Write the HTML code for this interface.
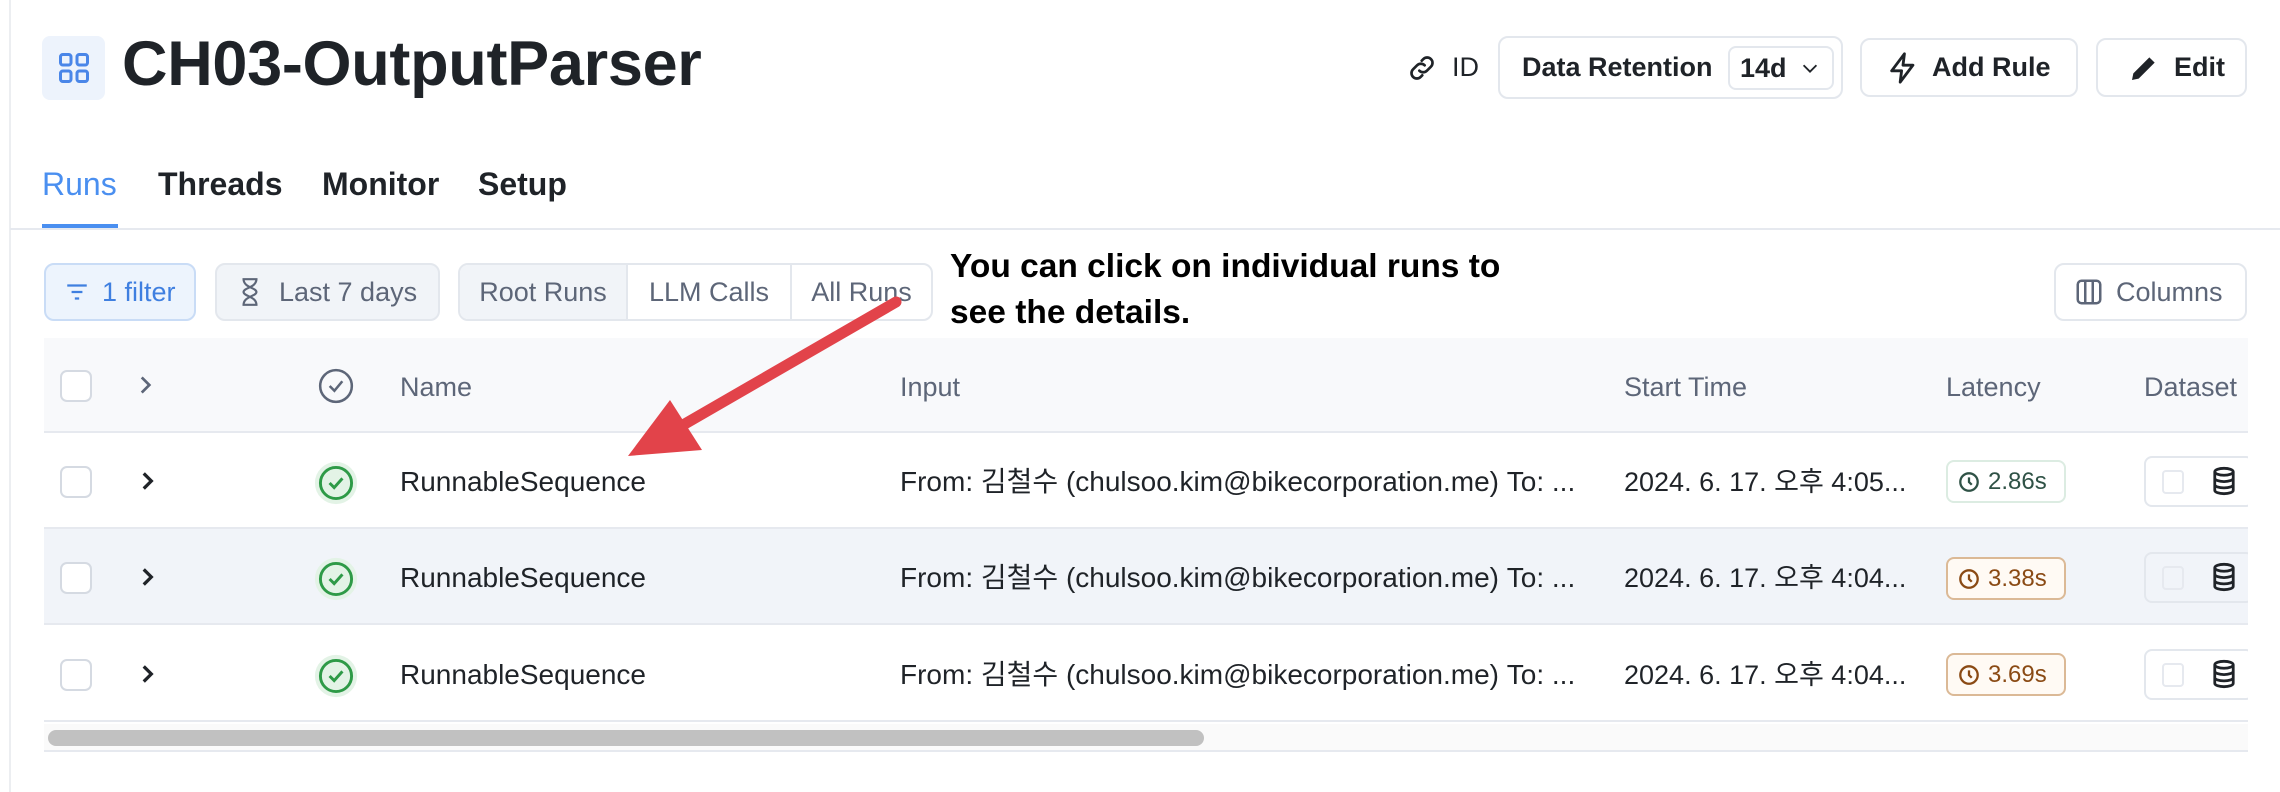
<!DOCTYPE html>
<html><head><meta charset="utf-8"><style>
*{box-sizing:border-box;margin:0;padding:0}
body{width:2280px;height:792px;background:#fff;position:relative;overflow:hidden;font-family:"Liberation Sans","Noto Sans CJK KR",sans-serif;color:#1f2328}
.a{position:absolute}
.btn{position:absolute;border:2px solid #e3e7ed;border-radius:10px;display:flex;align-items:center;font-size:27px;font-weight:bold;color:#1f2328}
.g{color:#5d6678;font-weight:normal}
.hdr{position:absolute;top:372px;font-size:27px;color:#5d6678}
.cb{position:absolute;width:32px;height:32px;border:2px solid #d5dae2;border-radius:7px;background:#fff}
.row{position:absolute;left:44px;width:2204px;height:96px;border-bottom:2px solid #e6e9ef}
.t{position:absolute;font-size:28px;line-height:32px;height:32px;color:#1f2328;white-space:nowrap}
.lat{position:absolute;left:1946px;width:120px;height:43px;border:2px solid;border-radius:8px;font-size:24px;display:flex;align-items:center;padding-left:10px;gap:8px}
.ds{position:absolute;left:2144px;width:110px;height:51px;border:2px solid #e3e7ed;border-radius:8px;background:#fff}
</style></head><body>
<div class="a" style="left:9px;top:0;width:2px;height:792px;background:#eceef1"></div>
<div class="a" style="left:42px;top:36px;width:63px;height:64px;background:#edf3fc;border-radius:8px"></div>
<svg class="a" style="left:56px;top:50px" width="36" height="36" viewBox="0 0 24 24" fill="none" stroke="#4a86e8" stroke-width="2"><rect x="3" y="3" width="7" height="7" rx="1.5"/><rect x="14" y="3" width="7" height="7" rx="1.5"/><rect x="3" y="14" width="7" height="7" rx="1.5"/><rect x="14" y="14" width="7" height="7" rx="1.5"/></svg>
<div class="a" style="left:122px;top:28px;font-size:63px;font-weight:bold;color:#1f2328;letter-spacing:-0.3px">CH03-OutputParser</div>

<svg class="a" style="left:1406px;top:52px" width="32" height="32" viewBox="0 0 24 24" fill="none" stroke="#1f2328" stroke-width="2" stroke-linecap="round"><path d="M10 14a4 4 0 0 0 5.7 0l3-3a4 4 0 0 0-5.7-5.7l-1.2 1.2"/><path d="M14 10a4 4 0 0 0-5.7 0l-3 3a4 4 0 0 0 5.7 5.7l1.2-1.2"/></svg>
<div class="a" style="left:1452px;top:52px;font-size:27px;color:#1f2328">ID</div>
<div class="btn" style="left:1498px;top:36px;width:345px;height:63px;padding-left:22px">Data Retention
 <div style="position:absolute;left:228px;top:8px;width:106px;height:44px;border:2px solid #e3e7ed;border-radius:8px;display:flex;align-items:center;padding-left:10px">14d<svg style="margin-left:12px" width="22" height="22" viewBox="0 0 24 24" fill="none" stroke="#1f2328" stroke-width="2"><path d="M5 9l7 7 7-7"/></svg></div></div>
<div class="btn" style="left:1860px;top:38px;width:218px;height:59px;padding-left:24px"><svg width="34" height="34" viewBox="0 0 24 24" fill="none" stroke="#1f2328" stroke-width="2" stroke-linejoin="round"><path d="M13 2L4 14h7l-1 8 9-12h-7z"/></svg><span style="margin-left:12px">Add Rule</span></div>
<div class="btn" style="left:2096px;top:38px;width:151px;height:59px;padding-left:30px"><svg width="32" height="32" viewBox="0 0 24 24"><path d="M3 21l1-5L16 4l4 4L8 20z" fill="#1f2328"/></svg><span style="margin-left:14px">Edit</span></div>

<div class="a" style="left:42px;top:166px;font-size:32px;color:#4a8ff0">Runs</div>
<div class="a" style="left:158px;top:166px;font-size:32px;font-weight:bold">Threads</div>
<div class="a" style="left:322px;top:166px;font-size:32px;font-weight:bold">Monitor</div>
<div class="a" style="left:478px;top:166px;font-size:32px;font-weight:bold">Setup</div>
<div class="a" style="left:42px;top:224px;width:76px;height:4px;background:#4a8ff0"></div>
<div class="a" style="left:10px;top:228px;width:2270px;height:2px;background:#e6e9ef"></div>

<div class="btn" style="left:44px;top:263px;width:152px;height:58px;background:#edf4fd;border-color:#c9dcf6;color:#3f7fe0;font-weight:normal;padding-left:18px"><svg width="26" height="26" viewBox="0 0 24 24" stroke="#3f7fe0" stroke-width="2"><path d="M3 6h18M7 12h10M10 18h4"/></svg><span style="margin-left:12px">1 filter</span></div>
<div class="btn g" style="left:215px;top:263px;width:225px;height:58px;background:#f1f4f8;padding-left:20px"><svg width="26" height="30" viewBox="0 0 24 28" fill="none" stroke="#5d6678" stroke-width="2"><path d="M5 2h14M5 26h14M6 2c0 8 12 8 12 12S6 18 6 26M18 2c0 8-12 8-12 12s12 4 12 12"/></svg><span style="margin-left:16px">Last 7 days</span></div>
<div class="btn g" style="left:458px;top:263px;width:475px;height:58px;overflow:hidden">
 <div style="width:168px;height:100%;background:#f1f4f8;display:flex;align-items:center;justify-content:center;border-right:2px solid #e3e7ed">Root Runs</div>
 <div style="width:164px;height:100%;display:flex;align-items:center;justify-content:center;border-right:2px solid #e3e7ed">LLM Calls</div>
 <div style="flex:1;height:100%;display:flex;align-items:center;justify-content:center">All Runs</div></div>
<div class="a" style="left:950px;top:244px;font-size:33.5px;font-weight:bold;line-height:46px;color:#000">You can click on individual runs to<br>see the details.</div>
<div class="btn g" style="left:2054px;top:263px;width:193px;height:58px;padding-left:18px"><svg width="30" height="30" viewBox="0 0 24 24" fill="none" stroke="#5d6678" stroke-width="2"><rect x="3" y="3" width="18" height="18" rx="3"/><path d="M9 3v18M15 3v18"/></svg><span style="margin-left:12px">Columns</span></div>

<div class="a" style="left:44px;top:338px;width:2204px;height:95px;background:#f8f9fb;border-bottom:2px solid #e6e9ef"></div>
<div class="cb" style="left:60px;top:370px"></div>
<svg class="a" style="left:132px;top:372px" width="26" height="26" viewBox="0 0 24 24" fill="none" stroke="#5d6678" stroke-width="2.5"><path d="M9 5l7 7-7 7"/></svg>
<svg class="a" style="left:317px;top:367px" width="38" height="38" viewBox="0 0 24 24" fill="none" stroke="#5d6678" stroke-width="1.6"><circle cx="12" cy="12" r="10"/><path d="M8 12l3 3 5-6"/></svg>
<div class="hdr" style="left:400px">Name</div>
<div class="hdr" style="left:900px">Input</div>
<div class="hdr" style="left:1624px">Start Time</div>
<div class="hdr" style="left:1946px">Latency</div>
<div class="hdr" style="left:2144px">Dataset</div>

<div class="row" style="top:433px"></div>
<div class="row" style="top:529px;background:#f1f4f9"></div>
<div class="row" style="top:626px"></div>

<div class="cb" style="left:60px;top:466px"></div>
<div class="cb" style="left:60px;top:562px"></div>
<div class="cb" style="left:60px;top:659px"></div>
<svg class="a" style="left:134px;top:468px" width="26" height="26" viewBox="0 0 24 24" fill="none" stroke="#1f2328" stroke-width="3"><path d="M9 5l7 7-7 7"/></svg>
<svg class="a" style="left:134px;top:564px" width="26" height="26" viewBox="0 0 24 24" fill="none" stroke="#1f2328" stroke-width="3"><path d="M9 5l7 7-7 7"/></svg>
<svg class="a" style="left:134px;top:661px" width="26" height="26" viewBox="0 0 24 24" fill="none" stroke="#1f2328" stroke-width="3"><path d="M9 5l7 7-7 7"/></svg>
<svg class="a" style="left:314px;top:461px" width="44" height="44" viewBox="0 0 24 24"><circle cx="12" cy="12" r="11.5" fill="#e3f3e6"/><circle cx="12" cy="12" r="8.5" fill="none" stroke="#2e9a47" stroke-width="1.6"/><path d="M8.5 12l2.5 2.5 4.5-5" fill="none" stroke="#2e9a47" stroke-width="1.6"/></svg>
<svg class="a" style="left:314px;top:557px" width="44" height="44" viewBox="0 0 24 24"><circle cx="12" cy="12" r="11.5" fill="#e3f3e6"/><circle cx="12" cy="12" r="8.5" fill="none" stroke="#2e9a47" stroke-width="1.6"/><path d="M8.5 12l2.5 2.5 4.5-5" fill="none" stroke="#2e9a47" stroke-width="1.6"/></svg>
<svg class="a" style="left:314px;top:654px" width="44" height="44" viewBox="0 0 24 24"><circle cx="12" cy="12" r="11.5" fill="#e3f3e6"/><circle cx="12" cy="12" r="8.5" fill="none" stroke="#2e9a47" stroke-width="1.6"/><path d="M8.5 12l2.5 2.5 4.5-5" fill="none" stroke="#2e9a47" stroke-width="1.6"/></svg>

<div class="t" style="left:400px;top:466px">RunnableSequence</div>
<div class="t" style="left:400px;top:562px">RunnableSequence</div>
<div class="t" style="left:400px;top:659px">RunnableSequence</div>
<div class="t" style="left:900px;top:466px">From: 김철수 (chulsoo.kim@bikecorporation.me) To: ...</div>
<div class="t" style="left:900px;top:562px">From: 김철수 (chulsoo.kim@bikecorporation.me) To: ...</div>
<div class="t" style="left:900px;top:659px">From: 김철수 (chulsoo.kim@bikecorporation.me) To: ...</div>
<div class="t" style="left:1624px;top:466px;font-size:27px">2024. 6. 17. 오후 4:05...</div>
<div class="t" style="left:1624px;top:562px;font-size:27px">2024. 6. 17. 오후 4:04...</div>
<div class="t" style="left:1624px;top:659px;font-size:27px">2024. 6. 17. 오후 4:04...</div>

<div class="lat" style="top:460px;border-color:#dcece2;color:#2f5246"><svg width="22" height="22" viewBox="0 0 24 24" fill="none" stroke="#2f5246" stroke-width="2.5"><circle cx="12" cy="12" r="9.5"/><path d="M12 7v5l3 3"/></svg>2.86s</div>
<div class="lat" style="top:557px;border-color:#dbb996;background:#fffaf4;color:#8a4a14"><svg width="22" height="22" viewBox="0 0 24 24" fill="none" stroke="#8a4a14" stroke-width="2.5"><circle cx="12" cy="12" r="9.5"/><path d="M12 7v5l3 3"/></svg>3.38s</div>
<div class="lat" style="top:653px;border-color:#dbb996;background:#fffaf4;color:#8a4a14"><svg width="22" height="22" viewBox="0 0 24 24" fill="none" stroke="#8a4a14" stroke-width="2.5"><circle cx="12" cy="12" r="9.5"/><path d="M12 7v5l3 3"/></svg>3.69s</div>

<div class="a" style="left:0;top:0;width:2248px;height:792px;overflow:hidden">
<div class="ds" style="top:456px"></div><div class="ds" style="top:552px;background:#f1f4f9"></div><div class="ds" style="top:649px"></div>
<div class="a" style="left:2162px;top:470px;width:22px;height:24px;border:2px solid #e6e9ef;border-radius:4px"></div>
<div class="a" style="left:2162px;top:566px;width:22px;height:24px;border:2px solid #e6e9ef;border-radius:4px"></div>
<div class="a" style="left:2162px;top:663px;width:22px;height:24px;border:2px solid #e6e9ef;border-radius:4px"></div>
<svg class="a" style="left:2210px;top:466px" width="28" height="30" viewBox="0 0 24 26" fill="none" stroke="#1f2328" stroke-width="2.4"><ellipse cx="12" cy="5" rx="8" ry="3"/><path d="M4 5v16c0 1.7 3.6 3 8 3s8-1.3 8-3V5M4 10.5c0 1.7 3.6 3 8 3s8-1.3 8-3M4 16c0 1.7 3.6 3 8 3s8-1.3 8-3"/></svg>
<svg class="a" style="left:2210px;top:562px" width="28" height="30" viewBox="0 0 24 26" fill="none" stroke="#1f2328" stroke-width="2.4"><ellipse cx="12" cy="5" rx="8" ry="3"/><path d="M4 5v16c0 1.7 3.6 3 8 3s8-1.3 8-3V5M4 10.5c0 1.7 3.6 3 8 3s8-1.3 8-3M4 16c0 1.7 3.6 3 8 3s8-1.3 8-3"/></svg>
<svg class="a" style="left:2210px;top:659px" width="28" height="30" viewBox="0 0 24 26" fill="none" stroke="#1f2328" stroke-width="2.4"><ellipse cx="12" cy="5" rx="8" ry="3"/><path d="M4 5v16c0 1.7 3.6 3 8 3s8-1.3 8-3V5M4 10.5c0 1.7 3.6 3 8 3s8-1.3 8-3M4 16c0 1.7 3.6 3 8 3s8-1.3 8-3"/></svg>
</div>

<div class="a" style="left:44px;top:724px;width:2204px;height:28px;background:#fafafa;border-bottom:2px solid #e6e9ef"></div>
<div class="a" style="left:48px;top:730px;width:1156px;height:16px;background:#c1c1c1;border-radius:8px"></div>

<svg class="a" style="left:0;top:0" width="2280" height="792"><path d="M896 302 L683 425" stroke="#e2434a" stroke-width="11" stroke-linecap="round"/><path d="M628 456 L670 400 L702 450 Z" fill="#e2434a"/></svg>
</body></html>
